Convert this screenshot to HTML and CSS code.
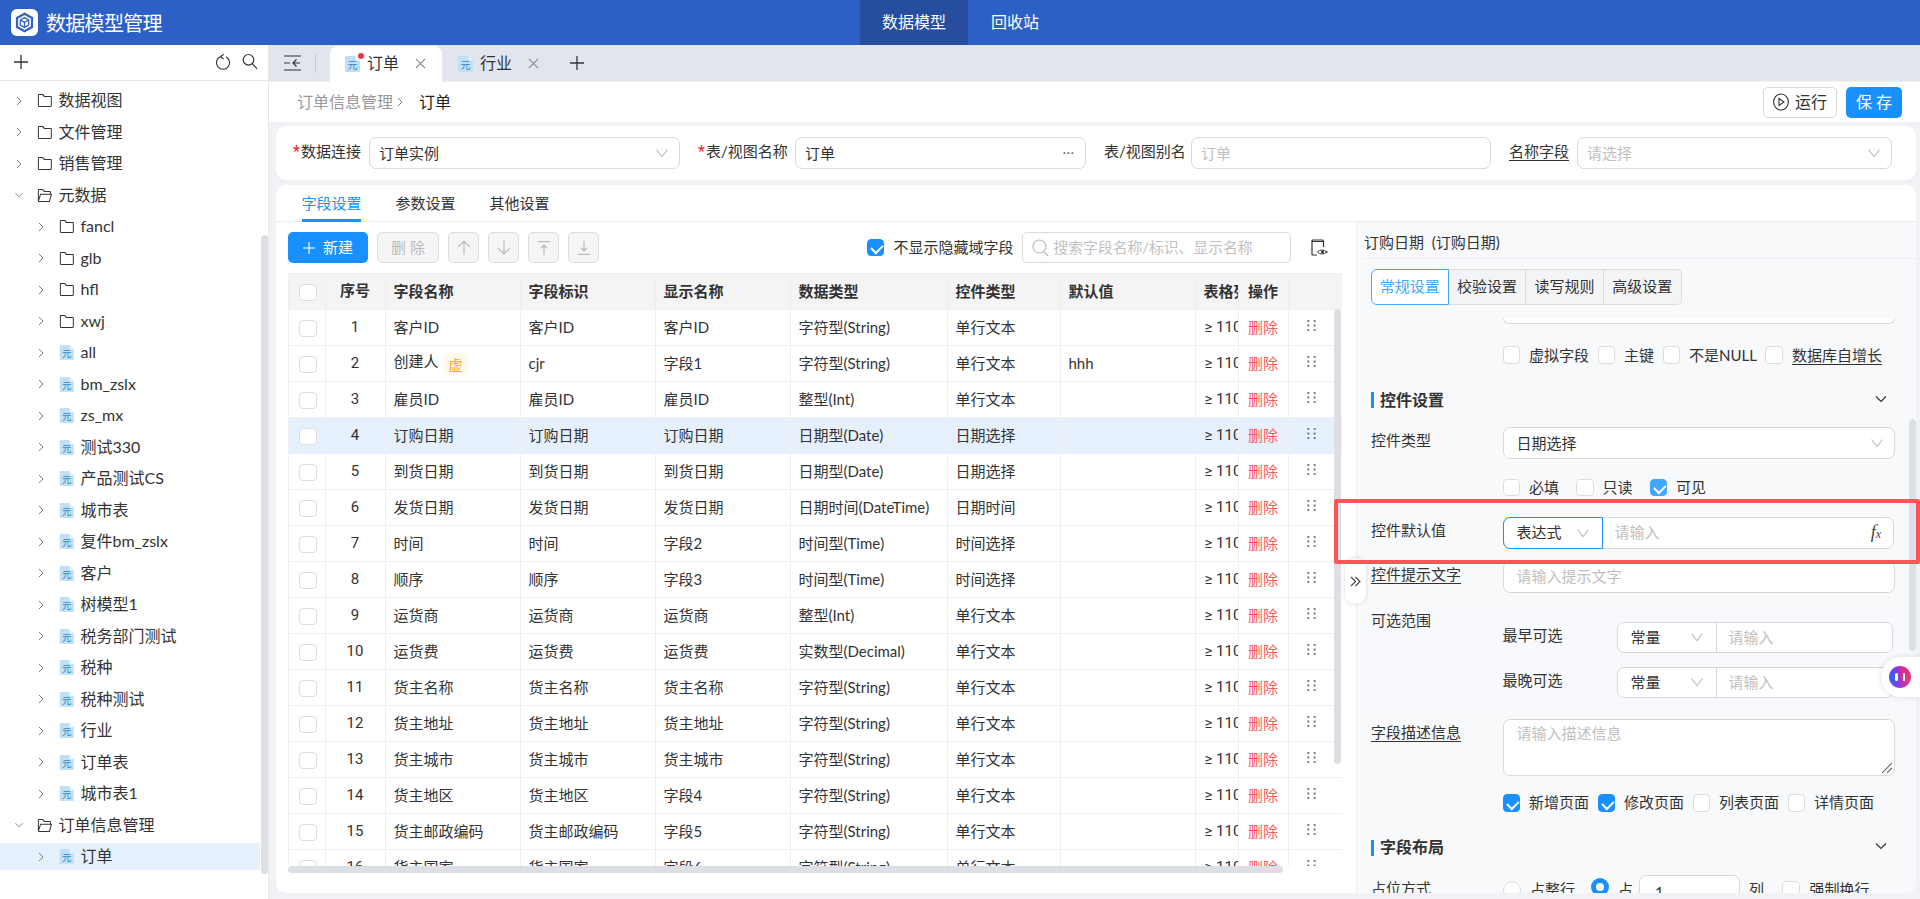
FILE: index.html
```html
<!DOCTYPE html>
<html lang="zh-CN">
<head>
<meta charset="utf-8">
<title>数据模型管理</title>
<link rel="stylesheet" href="styles.css">
</head>
<body>
<svg class="defs" width="0" height="0">
  <symbol id="chev-r" viewBox="0 0 10 14"><path d="M2.5 2 7.5 7 2.5 12" fill="none" stroke="#777" stroke-width="1.2"/></symbol>
  <symbol id="chev-d" viewBox="0 0 14 10"><path d="M2 2.5 7 7.500 12 2.5" fill="none" stroke="currentColor" stroke-width="1.2"/></symbol>
  <symbol id="sel-d" viewBox="0 0 14 10"><path d="M1.5 1.5 7 8.5 12.5 1.5" fill="none" stroke="#bbb" stroke-width="1.1"/></symbol>
  <symbol id="folder" viewBox="0 0 17 16"><path d="M1.5 13.8V2.2q0-.7.7-.7h4.2l1.6 2h7q.7 0 .7.7v9.6q0 .7-.7.7H2.2q-.7 0-.7-.7Z" fill="none" stroke="#333" stroke-width="1.1"/></symbol>
  <symbol id="folder-open" viewBox="0 0 17 16"><path d="M1.5 14V2.2q0-.7.7-.7h4.2l1.6 2h6q.7 0 .7.7V6.500M1.500 14 4 6.500h11.800L13.600 14.500H2Z" fill="none" stroke="#333" stroke-width="1.1"/></symbol>
  <symbol id="doc" viewBox="0 0 15 16"><path d="M0 1q0-1 1-1h9.500L15 4.500V15q0 1-1 1H1q-1 0-1-1Z" fill="#bfe0f5"/><path d="M10.500 0 15 4.500h-4.500Z" fill="#eaf5fc"/><text x="7.500" y="12.500" text-anchor="middle" font-size="10" fill="#2f86c4" font-family="Noto Sans CJK SC">元</text></symbol>
  <symbol id="close" viewBox="0 0 12 12"><path d="M1 1 11 11M11 1 1 11" fill="none" stroke="#888" stroke-width="1.2"/></symbol>
  <symbol id="plus" viewBox="0 0 14 14"><path d="M7 0V14M0 7H14" fill="none" stroke="currentColor" stroke-width="1.3"/></symbol>
  <symbol id="dots" viewBox="0 0 10 12"><g fill="#666"><rect x="0.500" width="2" height="2"/><rect x="7.500" width="2" height="2"/><rect x="0.500" y="5" width="2" height="2"/><rect x="7.500" y="5" width="2" height="2"/><rect x="0.500" y="10" width="2" height="2"/><rect x="7.500" y="10" width="2" height="2"/></g></symbol>
</svg>

<header class="topbar">
  <div class="brand">
    <span class="logo"><svg width="21" height="21" viewBox="0 0 21 21"><path d="M10.500 1.800 18 6v9l-7.500 4.200L3 15V6Z" fill="none" stroke="#3460c0" stroke-width="2.200"/><path d="M6.300 8 10.500 5.600 14.700 8v5l-4.200 2.400L6.300 13ZM6.300 8l4.200 2.400L14.700 8M10.500 10.400v5" fill="none" stroke="#3460c0" stroke-width="1.300"/></svg></span>
    <span class="brand-name">数据模型管理</span>
  </div>
  <nav class="topnav">
    <a class="topnav-item active">数据模型</a>
    <a class="topnav-item">回收站</a>
  </nav>
</header>

<div class="main">
  <aside class="sidebar">
    <div class="side-tools">
      <svg class="ico-plus" width="14" height="14"><use href="#plus"/></svg>
      <span class="side-tools-right">
        <svg width="16" height="18" viewBox="0 0 16 18"><path d="M5 3.800A6.600 6.600 0 1 0 11 3.800M8.700 1.200 5.400 3.700 8.700 6" fill="none" stroke="#333" stroke-width="1.100"/></svg>
        <svg width="16" height="17" viewBox="0 0 16 17"><circle cx="6.500" cy="6.800" r="5.300" fill="none" stroke="#333" stroke-width="1.200"/><path d="M10.500 10.800 15 15.800" stroke="#333" stroke-width="1.200"/></svg>
      </span>
    </div>
    <ul class="tree">
      <li class="node"><svg class="chev"><use href="#chev-r"/></svg><svg class="nico"><use href="#folder"/></svg>数据视图</li>
      <li class="node"><svg class="chev"><use href="#chev-r"/></svg><svg class="nico"><use href="#folder"/></svg>文件管理</li>
      <li class="node"><svg class="chev"><use href="#chev-r"/></svg><svg class="nico"><use href="#folder"/></svg>销售管理</li>
      <li class="node"><svg class="chev-o"><use href="#chev-d"/></svg><svg class="nico"><use href="#folder-open"/></svg>元数据</li>
      <li class="node sub"><svg class="chev"><use href="#chev-r"/></svg><svg class="nico"><use href="#folder"/></svg>fancl</li>
      <li class="node sub"><svg class="chev"><use href="#chev-r"/></svg><svg class="nico"><use href="#folder"/></svg>glb</li>
      <li class="node sub"><svg class="chev"><use href="#chev-r"/></svg><svg class="nico"><use href="#folder"/></svg>hfl</li>
      <li class="node sub"><svg class="chev"><use href="#chev-r"/></svg><svg class="nico"><use href="#folder"/></svg>xwj</li>
      <li class="node sub"><svg class="chev"><use href="#chev-r"/></svg><svg class="nico"><use href="#doc"/></svg>all</li>
      <li class="node sub"><svg class="chev"><use href="#chev-r"/></svg><svg class="nico"><use href="#doc"/></svg>bm_zslx</li>
      <li class="node sub"><svg class="chev"><use href="#chev-r"/></svg><svg class="nico"><use href="#doc"/></svg>zs_mx</li>
      <li class="node sub"><svg class="chev"><use href="#chev-r"/></svg><svg class="nico"><use href="#doc"/></svg>测试330</li>
      <li class="node sub"><svg class="chev"><use href="#chev-r"/></svg><svg class="nico"><use href="#doc"/></svg>产品测试CS</li>
      <li class="node sub"><svg class="chev"><use href="#chev-r"/></svg><svg class="nico"><use href="#doc"/></svg>城市表</li>
      <li class="node sub"><svg class="chev"><use href="#chev-r"/></svg><svg class="nico"><use href="#doc"/></svg>复件bm_zslx</li>
      <li class="node sub"><svg class="chev"><use href="#chev-r"/></svg><svg class="nico"><use href="#doc"/></svg>客户</li>
      <li class="node sub"><svg class="chev"><use href="#chev-r"/></svg><svg class="nico"><use href="#doc"/></svg>树模型1</li>
      <li class="node sub"><svg class="chev"><use href="#chev-r"/></svg><svg class="nico"><use href="#doc"/></svg>税务部门测试</li>
      <li class="node sub"><svg class="chev"><use href="#chev-r"/></svg><svg class="nico"><use href="#doc"/></svg>税种</li>
      <li class="node sub"><svg class="chev"><use href="#chev-r"/></svg><svg class="nico"><use href="#doc"/></svg>税种测试</li>
      <li class="node sub"><svg class="chev"><use href="#chev-r"/></svg><svg class="nico"><use href="#doc"/></svg>行业</li>
      <li class="node sub"><svg class="chev"><use href="#chev-r"/></svg><svg class="nico"><use href="#doc"/></svg>订单表</li>
      <li class="node sub"><svg class="chev"><use href="#chev-r"/></svg><svg class="nico"><use href="#doc"/></svg>城市表1</li>
      <li class="node"><svg class="chev-o"><use href="#chev-d"/></svg><svg class="nico"><use href="#folder-open"/></svg>订单信息管理</li>
      <li class="node sub selected"><svg class="chev"><use href="#chev-r"/></svg><svg class="nico"><use href="#doc"/></svg>订单</li>
    </ul>
    <span class="side-scroll"></span>
  </aside>

  <section class="content">
    <div class="tabbar">
      <svg class="tab-toggle" width="17" height="16" viewBox="0 0 17 16"><path d="M0 1H17M0 15H17M0 8H6M16 8H9M12.500 4.500 9 8l3.500 3.500" fill="none" stroke="#333" stroke-width="1.200"/></svg>
      <span class="tab-sep"></span>
      <div class="tab active">
        <span class="tab-ico"><svg width="15" height="16"><use href="#doc"/></svg><i class="tab-dot"></i></span>
        <span class="tab-text">订单</span>
        <svg class="tab-x" width="11" height="11"><use href="#close"/></svg>
      </div>
      <div class="tab">
        <span class="tab-ico"><svg width="15" height="16"><use href="#doc"/></svg></span>
        <span class="tab-text">行业</span>
        <svg class="tab-x" width="11" height="11"><use href="#close"/></svg>
      </div>
      <svg class="tab-add" width="14" height="14"><use href="#plus"/></svg>
    </div>

    <div class="crumbbar">
      <span class="crumb-parent">订单信息管理</span>
      <svg class="crumb-sep" width="8" height="14"><use href="#chev-r"/></svg>
      <span class="crumb-cur">订单</span>
      <span class="crumb-actions">
        <button class="btn btn-run"><svg width="16" height="18" viewBox="0 0 16 18"><ellipse cx="8" cy="9" rx="7.400" ry="8" fill="none" stroke="#333" stroke-width="1.100"/><path d="M6 5.500 11 9 6 12.500Z" fill="none" stroke="#333" stroke-width="1.100"/></svg>运行</button>
        <button class="btn btn-save">保 存</button>
      </span>
    </div>

    <div class="card form-card">
      <div class="field"><label class="flabel l68"><i class="req">*</i>数据连接</label><div class="input w311"><span>订单实例</span><svg class="sel-ico" width="14" height="10"><use href="#sel-d"/></svg></div></div>
      <div class="field"><label class="flabel l89"><i class="req">*</i>表/视图名称</label><div class="input w291"><span>订单</span><span class="more">···</span></div></div>
      <div class="field"><label class="flabel l79">表/视图别名</label><div class="input w300"><span class="ph">订单</span></div></div>
      <div class="field"><label class="flabel l60 ul">名称字段</label><div class="input w315"><span class="ph">请选择</span><svg class="sel-ico" width="14" height="10"><use href="#sel-d"/></svg></div></div>
    </div>

    <div class="card work-card">
      <div class="work-tabs">
        <a class="wt active">字段设置</a><a class="wt">参数设置</a><a class="wt">其他设置</a>
      </div>
      <div class="work-body">
        <div class="left-pane">
          <div class="tools">
            <button class="tbtn primary"><svg width="12" height="12" viewBox="0 0 14 14"><use href="#plus"/></svg>新建</button>
            <button class="tbtn disabled">删 除</button>
            <button class="ibtn"><svg width="14" height="15" viewBox="0 0 14 15"><path d="M7 15V1M1 7l6-6 6 6" fill="none" stroke="#bbb" stroke-width="1.200"/></svg></button>
            <button class="ibtn"><svg width="14" height="15" viewBox="0 0 14 15"><path d="M7 0V14M1 8l6 6 6-6" fill="none" stroke="#bbb" stroke-width="1.200"/></svg></button>
            <button class="ibtn"><svg width="12" height="14" viewBox="0 0 12 14"><path d="M0 .600H12M6 14V4M3 7l3-3 3 3" fill="none" stroke="#bbb" stroke-width="1.200"/></svg></button>
            <button class="ibtn"><svg width="12" height="14" viewBox="0 0 12 14"><path d="M0 13.400H12M6 0V10M3 7l3 3 3-3" fill="none" stroke="#bbb" stroke-width="1.200"/></svg></button>
            <span class="tools-right">
              <span class="cb on"></span><span class="hide-label">不显示隐藏域字段</span>
              <div class="search"><svg width="17" height="18" viewBox="0 0 17 18"><circle cx="7.500" cy="7.500" r="6.500" fill="none" stroke="#bbb" stroke-width="1.200"/><path d="M12 12.500 16 17" stroke="#bbb" stroke-width="1.200"/></svg><span class="ph">搜索字段名称/标识、显示名称</span></div>
              <svg class="eye" width="17" height="17" viewBox="0 0 17 17"><path d="M6 16H2q-1 0-1-1V2q0-1 1-1h9.500q1 0 1 1v6" fill="none" stroke="#333" stroke-width="1.200"/><path d="M1 2.500H12.500" stroke="#333" stroke-width="1.200"/><path d="M6.500 13q3.500-4 10 0-6.500 4-10 0Z" fill="#fff" stroke="#333" stroke-width="1"/><circle cx="11.500" cy="13" r="1.500" fill="#333"/></svg>
            </span>
          </div>
          <div class="table-wrap">
            <table class="grid">
              <colgroup><col class="c1"><col class="c2"><col class="c3"><col class="c3"><col class="c3"><col class="c4"><col class="c5"><col class="c3"><col class="c6"><col class="c7"><col class="c8"></colgroup>
              <thead><tr><th><span class="cb"></span></th><th class="ctr">序号</th><th>字段名称</th><th>字段标识</th><th>显示名称</th><th>数据类型</th><th>控件类型</th><th>默认值</th><th>表格列宽</th><th class="op">操作</th><th></th></tr></thead>
              <tbody>
                <tr><td><span class="cb"></span></td><td class="ctr">1</td><td>客户ID</td><td>客户ID</td><td>客户ID</td><td>字符型(String)</td><td>单行文本</td><td></td><td class="wd">≥ 110px</td><td class="del">删除</td><td><svg class="drag"><use href="#dots"/></svg></td></tr>
                <tr><td><span class="cb"></span></td><td class="ctr">2</td><td>创建人<span class="tag">虚</span></td><td>cjr</td><td>字段1</td><td>字符型(String)</td><td>单行文本</td><td>hhh</td><td class="wd">≥ 110px</td><td class="del">删除</td><td><svg class="drag"><use href="#dots"/></svg></td></tr>
                <tr><td><span class="cb"></span></td><td class="ctr">3</td><td>雇员ID</td><td>雇员ID</td><td>雇员ID</td><td>整型(Int)</td><td>单行文本</td><td></td><td class="wd">≥ 110px</td><td class="del">删除</td><td><svg class="drag"><use href="#dots"/></svg></td></tr>
                <tr class="cur"><td><span class="cb"></span></td><td class="ctr">4</td><td>订购日期</td><td>订购日期</td><td>订购日期</td><td>日期型(Date)</td><td>日期选择</td><td></td><td class="wd">≥ 110px</td><td class="del">删除</td><td><svg class="drag"><use href="#dots"/></svg></td></tr>
                <tr><td><span class="cb"></span></td><td class="ctr">5</td><td>到货日期</td><td>到货日期</td><td>到货日期</td><td>日期型(Date)</td><td>日期选择</td><td></td><td class="wd">≥ 110px</td><td class="del">删除</td><td><svg class="drag"><use href="#dots"/></svg></td></tr>
                <tr><td><span class="cb"></span></td><td class="ctr">6</td><td>发货日期</td><td>发货日期</td><td>发货日期</td><td>日期时间(DateTime)</td><td>日期时间</td><td></td><td class="wd">≥ 110px</td><td class="del">删除</td><td><svg class="drag"><use href="#dots"/></svg></td></tr>
                <tr><td><span class="cb"></span></td><td class="ctr">7</td><td>时间</td><td>时间</td><td>字段2</td><td>时间型(Time)</td><td>时间选择</td><td></td><td class="wd">≥ 110px</td><td class="del">删除</td><td><svg class="drag"><use href="#dots"/></svg></td></tr>
                <tr><td><span class="cb"></span></td><td class="ctr">8</td><td>顺序</td><td>顺序</td><td>字段3</td><td>时间型(Time)</td><td>时间选择</td><td></td><td class="wd">≥ 110px</td><td class="del">删除</td><td><svg class="drag"><use href="#dots"/></svg></td></tr>
                <tr><td><span class="cb"></span></td><td class="ctr">9</td><td>运货商</td><td>运货商</td><td>运货商</td><td>整型(Int)</td><td>单行文本</td><td></td><td class="wd">≥ 110px</td><td class="del">删除</td><td><svg class="drag"><use href="#dots"/></svg></td></tr>
                <tr><td><span class="cb"></span></td><td class="ctr">10</td><td>运货费</td><td>运货费</td><td>运货费</td><td>实数型(Decimal)</td><td>单行文本</td><td></td><td class="wd">≥ 110px</td><td class="del">删除</td><td><svg class="drag"><use href="#dots"/></svg></td></tr>
                <tr><td><span class="cb"></span></td><td class="ctr">11</td><td>货主名称</td><td>货主名称</td><td>货主名称</td><td>字符型(String)</td><td>单行文本</td><td></td><td class="wd">≥ 110px</td><td class="del">删除</td><td><svg class="drag"><use href="#dots"/></svg></td></tr>
                <tr><td><span class="cb"></span></td><td class="ctr">12</td><td>货主地址</td><td>货主地址</td><td>货主地址</td><td>字符型(String)</td><td>单行文本</td><td></td><td class="wd">≥ 110px</td><td class="del">删除</td><td><svg class="drag"><use href="#dots"/></svg></td></tr>
                <tr><td><span class="cb"></span></td><td class="ctr">13</td><td>货主城市</td><td>货主城市</td><td>货主城市</td><td>字符型(String)</td><td>单行文本</td><td></td><td class="wd">≥ 110px</td><td class="del">删除</td><td><svg class="drag"><use href="#dots"/></svg></td></tr>
                <tr><td><span class="cb"></span></td><td class="ctr">14</td><td>货主地区</td><td>货主地区</td><td>字段4</td><td>字符型(String)</td><td>单行文本</td><td></td><td class="wd">≥ 110px</td><td class="del">删除</td><td><svg class="drag"><use href="#dots"/></svg></td></tr>
                <tr><td><span class="cb"></span></td><td class="ctr">15</td><td>货主邮政编码</td><td>货主邮政编码</td><td>字段5</td><td>字符型(String)</td><td>单行文本</td><td></td><td class="wd">≥ 110px</td><td class="del">删除</td><td><svg class="drag"><use href="#dots"/></svg></td></tr>
                <tr><td><span class="cb"></span></td><td class="ctr">16</td><td>货主国家</td><td>货主国家</td><td>字段6</td><td>字符型(String)</td><td>单行文本</td><td></td><td class="wd">≥ 110px</td><td class="del">删除</td><td><svg class="drag"><use href="#dots"/></svg></td></tr>
              </tbody>
            </table>
            <span class="vscroll"></span>
          </div>
          <span class="hscroll"></span>
        </div>

        <div class="right-pane">
          <div class="rp-title">订购日期&nbsp;&nbsp;(订购日期)</div>
          <div class="seg">
            <a class="seg-i active">常规设置</a><a class="seg-i">校验设置</a><a class="seg-i">读写规则</a><a class="seg-i">高级设置</a>
          </div>
          <div class="rp-scroll">
            <div class="stub"></div>
            <div class="row-checks offset first">
              <span class="cb"></span><span class="ck">虚拟字段</span>
              <span class="cb"></span><span class="ck">主键</span>
              <span class="cb"></span><span class="ck">不是NULL</span>
              <span class="cb"></span><span class="ck ul">数据库自增长</span>
            </div>
            <div class="sec-head first-sec"><span class="sec-bar"></span><span class="sec-title">控件设置</span><svg width="14" height="10"><use href="#chev-d"/></svg></div>
            <div class="frow mt-19">
              <label class="rlabel">控件类型</label>
              <div class="input"><span>日期选择</span><svg class="sel-ico" width="14" height="10"><use href="#sel-d"/></svg></div>
            </div>
            <div class="row-checks offset mt-chk wide">
              <span class="cb"></span><span class="ck">必填</span>
              <span class="cb"></span><span class="ck">只读</span>
              <span class="cb on light"></span><span class="ck">可见</span>
            </div>
            <div class="frow mt-def">
              <label class="rlabel">控件默认值</label>
              <div class="combo">
                <div class="combo-sel focus"><span>表达式</span><svg width="14" height="10"><use href="#sel-d"/></svg></div>
                <div class="combo-in"><span class="ph">请输入</span><span class="fx">f<small>x</small></span></div>
              </div>
            </div>
            <div class="frow mt-hint">
              <label class="rlabel ul">控件提示文字</label>
              <div class="input"><span class="ph">请输入提示文字</span></div>
            </div>
            <div class="range">
              <label class="rlabel range-l">可选范围</label>
              <div class="range-rows">
                <div class="range-row"><span class="range-name">最早可选</span>
                  <div class="combo small"><div class="combo-sel"><span>常量</span><svg width="14" height="10"><use href="#sel-d"/></svg></div><div class="combo-in"><span class="ph">请输入</span></div></div>
                </div>
                <div class="range-row"><span class="range-name">最晚可选</span>
                  <div class="combo small"><div class="combo-sel"><span>常量</span><svg width="14" height="10"><use href="#sel-d"/></svg></div><div class="combo-in"><span class="ph">请输入</span></div></div>
                </div>
              </div>
            </div>
            <div class="frow mt-desc">
              <label class="rlabel ul">字段描述信息</label>
              <div class="textarea"><span class="ph">请输入描述信息</span><svg class="grip" width="10" height="10" viewBox="0 0 10 10"><path d="M0 10 10 0M5 10 10 5" stroke="#666" stroke-width="1.100"/></svg></div>
            </div>
            <div class="row-checks offset mt-pages">
              <span class="cb on"></span><span class="ck">新增页面</span>
              <span class="cb on"></span><span class="ck">修改页面</span>
              <span class="cb"></span><span class="ck">列表页面</span>
              <span class="cb"></span><span class="ck">详情页面</span>
            </div>
            <div class="sec-head"><span class="sec-bar"></span><span class="sec-title">字段布局</span><svg width="14" height="10"><use href="#chev-d"/></svg></div>
            <div class="frow mt-19">
              <label class="rlabel">占位方式</label>
              <div class="place">
                <span class="radio"></span><span class="pl-a">占整行</span>
                <span class="radio on"></span><span class="pl-b">占</span>
                <div class="num">1</div><span class="pl-c">列</span>
                <span class="cb"></span><span class="ck pl-d">强制换行</span>
              </div>
            </div>
          </div>
          <span class="rp-bar"></span>
        </div>
      </div>
    </div>
  </section>
</div>

<div class="collapse-btn"><svg width="11" height="11" viewBox="0 0 11 11"><path d="M1 1 5.500 5.500 1 10M5.500 1 10 5.500 5.500 10" fill="none" stroke="#444" stroke-width="1.100"/></svg></div>
<div class="highlight-box"></div>
<div class="ai-float"><span class="ai-face"><i></i><i></i></span></div>
</body>
</html>
```
FILE: styles.css
```css
* { box-sizing: border-box; }
html, body { margin: 0; height: 899px; overflow: hidden; }
body {
  position: relative;
  font-family: Lato, "Noto Sans CJK SC", sans-serif;
  font-size: 15px;
  line-height: 1.4;
  color: #333;
  background: #f0f2f6;
  display: flex;
  flex-direction: column;
}
.defs { position: absolute; }
button { font-family: inherit; padding: 0; cursor: pointer; line-height: 1.4; }
ul { list-style: none; margin: 0; padding: 0; }
label { display: block; }
i { font-style: normal; }

/* top bar */
.topbar { height: 45px; flex: none; background: #2d60c4; display: flex; position: relative; color: #fff; }
.brand { display: flex; align-items: center; padding-left: 11px; width: 162px; flex: none; white-space: nowrap; }
.logo { width: 27px; height: 27px; background: #fff; border-radius: 6px; display: flex; align-items: center; justify-content: center; flex: none; }
.brand-name { font-size: 20px; margin-left: 8px; letter-spacing: -0.7px; }
.topnav { display: flex; margin-left: 698px; }
.topnav-item { font-size: 16px; line-height: 44px; width: 108px; text-align: center; }
.topnav-item.active { background: #264d9e; }
.topnav-item + .topnav-item { width: auto; padding: 0 23px; }

.main { flex: 1; display: flex; min-height: 0; }

/* sidebar */
.sidebar { width: 269px; flex: none; background: #fff; border-right: 1px solid #e8e8e8; position: relative; }
.side-tools { height: 36px; border-bottom: 1px solid #e8e8e8; display: flex; align-items: center; padding: 0 10px 2px 14px; color: #333; }
.side-tools-right { margin-left: auto; display: flex; gap: 11px; align-items: center; }
.tree { padding-top: 6px; font-size: 16px; }
.node { height: 27px; margin-bottom: 4.5px; padding-left: 15px; display: flex; align-items: center; white-space: nowrap; margin-right: 8px; }
.node.sub { padding-left: 37px; }
.node.selected { background: #e6effc; }
.chev { width: 8px; height: 14px; margin-right: 14px; flex: none; }
.chev-o { width: 10px; height: 8px; margin: 0 13px 0 -1px; flex: none; color: #777; }
.nico { width: 15.500px; height: 15px; margin-right: 6px; flex: none; }
.side-scroll { position: absolute; left: 261px; top: 190px; width: 7px; height: 639px; border-radius: 4px; background: #dcdfe5; }

/* content */
.content { flex: 1; min-width: 0; display: flex; flex-direction: column; }
.tabbar { height: 36px; flex: none; background: #e2e5ee; display: flex; align-items: center; padding-left: 15px; position: relative; }
.tab-sep { width: 1px; height: 19px; background: #c4c7cf; margin: 0 14px; }
.tab { width: 112px; height: 36px; display: flex; align-items: center; padding-left: 15px; border-radius: 8px 8px 0 0; font-size: 16px; margin-bottom: -1px; }
.tab.active { background: #fff; }
.tab-ico { position: relative; display: flex; width: 15px; height: 16px; }
.tab-dot { position: absolute; right: -4px; top: -3px; width: 6px; height: 6px; border-radius: 50%; background: #f5343f; }
.tab-text { margin-left: 7px; width: 48px; }
.tab-x { flex: none; }
.tab + .tab { padding-left: 16px; width: 109px; }
.tab-add { color: #333; margin-left: 19px; }

.crumbbar { height: 41px; flex: none; background: #fff; border-top: 1px solid #f0f1f4; display: flex; align-items: center; padding: 0 18px 0 28px; font-size: 16px; }
.crumb-parent { color: #999; }
.crumb-sep { margin: 0 0 0 3px; }
.crumb-cur { color: #222; margin-left: 15px; }
.crumb-actions { margin-left: auto; display: flex; gap: 9px; }
.btn { height: 31px; border-radius: 5px; font-size: 16px; display: flex; align-items: center; justify-content: center; }
.btn-run { width: 74px; background: #fff; border: 1px solid #d9d9d9; color: #333; gap: 6px; }
.btn-save { width: 56px; background: #1890ff; border: 0; color: #fff; }

.card { background: #fff; border-radius: 10px; margin: 0 4px 0 6.500px; }
.form-card { height: 54px; margin-top: 4px; padding: 11px 0 0 17.500px; display: flex; gap: 18px; flex: none; }
.field { display: flex; gap: 8px; }
.flabel { line-height: 28px; white-space: nowrap; color: #333; }
.l68 { width: 68px; }
.l89 { width: 89px; }
.l79 { width: 79px; }
.l60 { width: 60px; }
.req { color: #f5222d; display: inline-block; width: 8px; font-size: 16px; font-family: Roboto, sans-serif; line-height: 16px; }
.ul { text-decoration: underline; text-underline-offset: 3px; }
.input { height: 32px; border: 1px solid #d9d9d9; border-radius: 7px; background: #fff; display: flex; align-items: center; padding: 0 10px 0 9px; font-size: 15px; position: relative; }
.w311 { width: 311px; }
.w291 { width: 291px; }
.w300 { width: 300px; }
.w315 { width: 315px; }
.sel-ico { margin-left: auto; flex: none; }
.more { margin-left: auto; color: #555; font-size: 12px; letter-spacing: 1px; }
.ph { color: #bfbfbf; white-space: nowrap; }

.work-card { margin-top: 5px; flex: 1; min-height: 0; margin-bottom: 6px; display: flex; flex-direction: column; overflow: hidden; }
.work-tabs { height: 37px; flex: none; border-bottom: 1px solid #ececec; display: flex; padding-left: 26px; gap: 35px; }
.wt { line-height: 36px; width: 59px; white-space: nowrap; height: 37px; color: #333; }
.wt.active { color: #1890ff; border-bottom: 3px solid #1890ff; }
.work-body { flex: 1; min-height: 0; display: flex; }

.left-pane { width: 1080px; flex: none; padding: 10px 0 0 12.500px; position: relative; }
.tools { height: 31px; display: flex; align-items: center; padding-right: 28px; }
.tbtn { height: 31px; border-radius: 5px; font-size: 15px; display: flex; align-items: center; justify-content: center; border: 1px solid transparent; }
.tbtn.primary { width: 80px; background: #1890ff; color: #fff; gap: 8px; border: 0; margin-right: 9px; }
.tbtn.disabled { width: 62px; background: #f5f5f5; border-color: #ddd; color: #bbb; margin-right: 9px; }
.ibtn { width: 31px; height: 31px; border: 1px solid #ddd; border-radius: 5px; background: #f5f5f5; display: flex; align-items: center; justify-content: center; margin-right: 9px; }
.tools-right { margin-left: auto; display: flex; align-items: center; }
.hide-label { margin: 0 8px 0 9px; white-space: nowrap; }
.search { width: 269px; height: 31px; border: 1px solid #d9d9d9; border-radius: 5px; display: flex; align-items: center; gap: 5px; padding-left: 9px; overflow: hidden; font-size: 14.800px; }
.eye { margin-left: 20px; }

.table-wrap { margin-top: 9.500px; width: 1054px; height: 593.500px; position: relative; overflow: hidden; }
.grid { table-layout: fixed; width: 1054px; border-collapse: collapse; font-size: 15px; }
.c1 { width: 37px; }
.c2 { width: 60px; }
.c3 { width: 135px; }
.c4 { width: 157px; }
.c5 { width: 113px; }
.c6 { width: 43px; }
.c7 { width: 50px; }
.c8 { width: 54px; }
.grid th, .grid td { height: 36px; padding: 0 0 0 7.500px; border: 1px solid #efefef; text-align: left; overflow: hidden; white-space: nowrap; background: #fff; }
.grid th { background: #f4f4f5; font-weight: 700; color: #333; }
.grid th:first-child, .grid td:first-child { padding-left: 10px; }
.grid .ctr { text-align: center; padding: 0 1px 0 0; font-family: Roboto, "Noto Sans CJK SC", sans-serif; }
.grid .wd { font-family: Roboto, sans-serif; padding-left: 8.500px; }
.grid .cur td { background: #e6effc; border-color: #e6effc #efefef; }
.grid td:last-child { padding-left: 18px; }
.grid .del, .grid .op { padding-left: 9px; }
.del { color: #ff5a5f; }
.drag { width: 9px; height: 11px; display: block; margin-top: -3px; }
.tag { display: inline-block; width: 24px; height: 22px; line-height: 24px; text-align: center; background: #fff9e9; color: #faad14; font-size: 14px; border-radius: 4px; margin-left: 5px; vertical-align: middle; }
.vscroll { position: absolute; left: 1046px; top: 36px; width: 7px; height: 455px; border-radius: 4px; background: #dcdfe5; }
.hscroll { position: absolute; left: 12.500px; top: 644px; width: 995px; height: 7px; border-radius: 4px; background: #dcdfe5; }

.cb { display: inline-block; position: relative; width: 17.500px; height: 17.500px; flex: none; border: 1px solid #ddd; border-radius: 4px; background: #fff; vertical-align: middle; }
.cb.on { background: #1890ff; border-color: #1890ff; }
.cb.on.light { background: #40a9ff; border-color: #40a9ff; }
.cb.on::after { content: ""; position: absolute; left: 5px; top: 2.500px; width: 5.500px; height: 9px; border: solid #fff; border-width: 0 2px 2px 0; transform: rotate(45deg); }

/* right pane */
.right-pane { flex: 1; min-width: 0; background: #f8f9fb; border-left: 1px solid #eceef2; position: relative; display: flex; flex-direction: column; padding-left: 14.500px; overflow: hidden; }
.rp-title { height: 37px; line-height: 41px; margin-left: -7px; border-bottom: 1px solid #eceef2; color: #333; flex: none; }
.seg { display: flex; margin-top: 10px; height: 36px; flex: none; width: 310.500px; }
.seg-i { width: 78px; height: 36px; line-height: 33px; text-align: center; background: #f3f4f6; border: 1px solid #dcdcdc; border-left: 0; white-space: nowrap; }
.seg-i:last-child { border-radius: 0 5px 5px 0; }
.seg-i.active { background: #fff; color: #40a9ff; border: 1px solid #40a9ff; border-radius: 6px 0 0 6px; }
.rp-scroll { margin-top: 13px; flex: 1; min-height: 0; overflow: hidden; padding-right: 21px; }
.stub { height: 6px; margin-left: 131.500px; background: #fff; border: 1px solid #d9d9d9; border-top: 0; border-radius: 0 0 7px 7px; }
.row-checks { display: flex; align-items: center; height: 20px; }
.offset { margin-left: 131.500px; }
.first { margin-top: 21px; }
.ck { margin: 0 8.500px 0 9px; white-space: nowrap; }
.wide .ck { margin-right: 17px; }
.sec-head { display: flex; align-items: center; height: 16px; margin-top: 27px; }
.sec-bar { width: 3px; height: 16px; background: #1890ff; margin-right: 6px; }
.sec-title { font-size: 16px; font-weight: 700; color: #333; line-height: 16px; margin-top: -1px; }
.sec-head svg { margin-left: auto; margin-right: 7px; margin-top: -3px; color: #333; }
.frow { display: grid; grid-template-columns: 131.500px 1fr; }
.rlabel { line-height: 26px; white-space: nowrap; }
.frow .input { padding-left: 13px; }
.mt-19 { margin-top: 19px; }
.mt-chk { margin-top: 18.700px; }
.mt-def { margin-top: 19.300px; }
.mt-hint { margin-top: 12px; }
.mt-desc { margin-top: 9px; }
.mt-pages { margin-top: 17px; }
.combo { display: flex; height: 32px; border: 1px solid #d9d9d9; border-radius: 7px; background: #fff; width: 391.500px; position: relative; }
.combo.small { width: 276.500px; height: 31px; }
.combo-sel { width: 99px; flex: none; display: flex; align-items: center; justify-content: space-between; padding: 0 12px 0 13px; border-right: 1px solid #d9d9d9; }
.combo-sel.focus { margin: -1px 0 -1px -1px; width: 100px; border: 1px solid #1890ff; border-radius: 7px 0 0 7px; }
.combo-in { flex: 1; display: flex; align-items: center; padding: 0 12px; }
.fx { margin-left: auto; font-family: "Liberation Serif", serif; font-style: italic; font-size: 18px; color: #444; }
.fx small { font-size: 12px; }
.range { display: grid; grid-template-columns: 131.500px 1fr; margin: 17px -21px 0 0; padding: 0 21px 12px 0; background: #f7f9fc; height: 100px; }
.range-l { margin-top: -3px; }
.range-rows { padding-top: 12px; display: flex; flex-direction: column; gap: 14px; }
.range-row { display: flex; }
.range-name { width: 114px; line-height: 26px; white-space: nowrap; }
.textarea { height: 57px; border: 1px solid #d9d9d9; border-radius: 7px; background: #fff; padding: 3px 13px; position: relative; }
.grip { position: absolute; right: 2px; bottom: 2px; }
.place { display: flex; align-items: flex-start; }
.radio { width: 18px; height: 18px; border: 1px solid #ddd; border-radius: 50%; background: #fff; flex: none; margin-top: 6px; }
.radio.on { border: 5px solid #1890ff; margin-top: 3px; }
.pl-a { margin: 4px 15.500px 0 9.500px; white-space: nowrap; }
.pl-b { margin: 4px 6px 0 9.500px; }
.num { width: 101px; height: 32px; border: 1px solid #d9d9d9; border-radius: 7px; background: #fff; padding-left: 15px; line-height: 33px; flex: none; }
.pl-c { margin: 4px 18px 0 9px; }
.place .cb { margin-top: 6px; }
.pl-d { margin: 4px 0 0 10px; }
.rp-bar { position: absolute; right: 0; top: 197px; width: 7px; height: 232px; border-radius: 4px; background: #dcdfe5; }

/* overlays */
.collapse-btn { position: absolute; left: 1345px; top: 558px; width: 21px; height: 46px; background: #fff; border-radius: 10px; display: flex; align-items: center; justify-content: center; box-shadow: 0 0 4px rgba(0,0,0,.15); }
.highlight-box { position: absolute; left: 1334px; top: 499px; right: 0; height: 65px; border: 4.500px solid #ff5555; border-radius: 2px; }
.ai-float { position: absolute; right: 0; top: 657px; width: 39px; height: 40px; background: #fff; border-radius: 20px 0 0 20px; box-shadow: 0 0 6px rgba(0,0,0,.12); display: flex; align-items: center; padding-left: 8px; }
.ai-face { width: 22px; height: 22px; border-radius: 50%; background: conic-gradient(from 20deg, #e02a8c, #e83a6e 25%, #9a35e0 45%, #2f63f0 65%, #7a3bea 85%, #e02a8c); display: flex; align-items: center; justify-content: center; gap: 5px; }
.ai-face i { width: 2.500px; height: 8px; border-radius: 2px; background: #fff; }
```
